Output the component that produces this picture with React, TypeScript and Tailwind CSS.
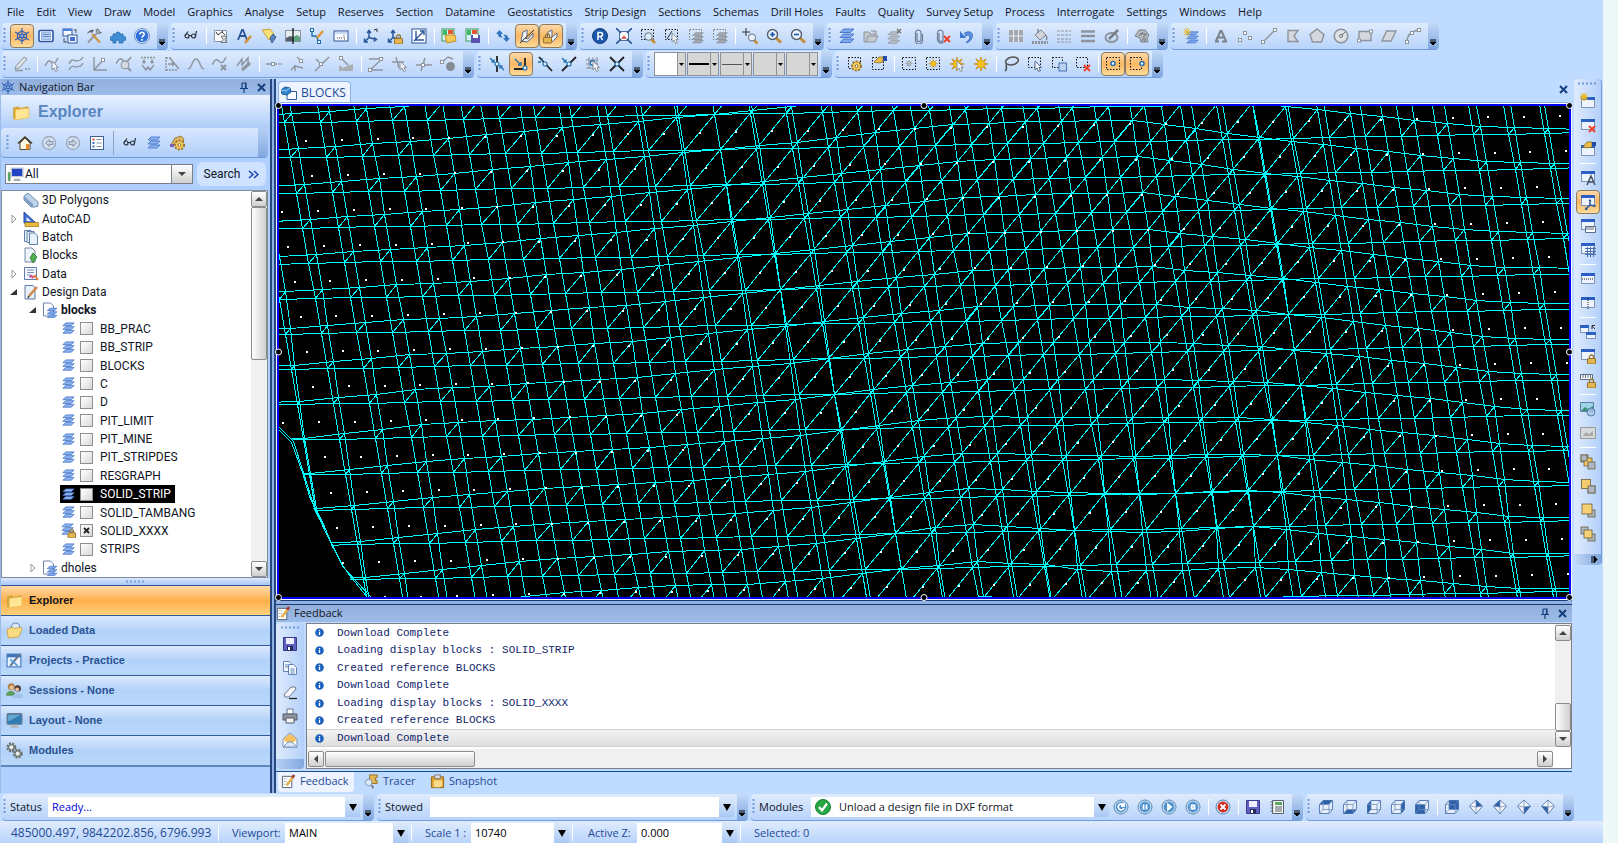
import { ReactNode } from "react";
import clsx from "clsx";

const NAVY = "#2a5599";
const GREY = "#8d949e";

const Win = ({ x = 1, y = 2, w = 14, h = 11 }: { x?: number; y?: number; w?: number; h?: number }) => (
  <>
    <rect x={x + 0.5} y={y + 0.5} width={w - 1} height={h - 1} fill="#eef4fd" stroke="#7d93b8" />
    <rect x={x} y={y} width={w} height={3} fill="#2c5fc4" />
  </>
);

const Layers = ({ fill = "#7fa9ee", line = "#3565bd" }: { fill?: string; line?: string }) => (
  <g fill={fill} stroke={line} strokeWidth=".8">
    <path d="M1 14.500 4.500 11H15l-3.500 3.500z" />
    <path d="M1 9.500 4.500 6H15l-3.500 3.500z" />
    <path d="M1 4.500 4.500 1H15l-3.500 3.500z" />
  </g>
);

const Dotted = ({ w = 13, h = 12, c = "#111" }: { w?: number; h?: number; c?: string }) => (
  <rect x="1.5" y="1.5" width={w} height={h} fill="none" stroke={c} strokeDasharray="1.5 1.5" />
);

const Lock = ({ x = 7, y = 6 }: { x?: number; y?: number }) => (
  <g transform={`translate(${x} ${y})`}>
    <path d="M2.5 5V3a2 2 0 0 1 4 0v2" fill="none" stroke="#96732a" strokeWidth="1.3" />
    <rect x=".5" y="4.5" width="8" height="5.5" rx=".6" fill="#e5b552" stroke="#96732a" />
  </g>
);

const Cursor = ({ c = "#8d949e" }: { c?: string }) => (
  <path d="M8 5v9l2-2 1.5 3.5 2-.8L12 11.500h2.500z" fill="#eef2f8" stroke={c} />
);

const Lens = ({ c = "#555f6e", mark }: { c?: string; mark?: string }) => (
  <>
    <path d="m10 10 5 4.500" stroke="#c98d35" strokeWidth="3" />
    <circle cx="6.500" cy="6.500" r="5" fill="#e8f1fc" stroke={c} strokeWidth="1.400" />
    {mark && <path d={mark} stroke="#1f57ab" strokeWidth="1.600" />}
  </>
);

const Sun = ({ c = "#f3c01f", s = "#c98c12" }: { c?: string; s?: string }) => (
  <>
    <path d="M8 1v14M1 8h14M3 3l10 10M13 3 3 13" stroke={s} strokeWidth="1.400" />
    <circle cx="8" cy="8" r="4" fill={c} stroke={s} strokeWidth=".6" />
  </>
);

const Cross = ({ x = 9, y = 9 }: { x?: number; y?: number }) => (
  <path d={`M${x} ${y}l6 6M${x + 6} ${y}l-6 6`} stroke="#f0412c" strokeWidth="2" />
);

const Folder = () => (
  <>
    <path d="M1 4l5-1 1 1.500L14 3l1 1v9l-12 2-2-1z" fill="#d7a537" />
    <path d="M3 6l12-1.500V13L3 15z" fill="#ffe594" stroke="#e6bd55" strokeWidth=".6" />
  </>
);

const Cube = ({ face }: { face: string }) => (
  <>
    <path d="M1.500 5.500 5 1.500h9.500v9L11 14.500H1.500z" fill="#e7eef8" stroke="#5a7fb5" />
    <path d={face} fill="#2f61a6" />
    <path d="M1.500 5.500H11v9M11 5.500l3.500-4M5 2v8.500h9M5 10.500l-3.500 4" fill="none" stroke="#6b8fc2" strokeWidth=".8" />
  </>
);

const Gem = ({ face }: { face: string }) => (
  <>
    <path d="M8 1l6.500 6L8 15 1.500 7z" fill="#f2f6fb" stroke="#6786b4" />
    <path d={face} fill="#2f61a6" />
    <path d="M8 1v7l-6.500-1M8 8l6.500-1M8 8v7" fill="none" stroke="#6786b4" strokeWidth=".7" />
  </>
);

const Round = ({ d, fill = "#4f93cf" }: { d: string; fill?: string }) => (
  <>
    <circle cx="8" cy="8" r="7" fill="#cfe2f3" stroke="#5b88b3" />
    <circle cx="8" cy="8" r="5.400" fill={fill} />
    <path d={d} fill="none" stroke="#fff" strokeWidth="1.800" />
  </>
);

const Axes = () => (
  <path
    d="M6 9.500V3M4 5l2-2.500L8 5M6 9.500l7 2M11 9.500l2.500 2-3 2M6 9.500l-4 4M1.500 10.500v3.500H5"
    fill="none"
    stroke={NAVY}
    strokeWidth="1.500"
  />
);

const Poly = ({ d, nodes = [], c = GREY }: { d: string; nodes?: number[][]; c?: string }) => (
  <>
    <path d={d} fill="none" stroke={c} strokeWidth="1.400" />
    {nodes.map(([x, y]) => (
      <rect key={`${x}-${y}`} x={x - 1.5} y={y - 1.5} width="3" height="3" fill="#fff" stroke={c} />
    ))}
  </>
);

const Snap = ({ d, arrow, x = 8, y = 8 }: { d: string; arrow?: string; x?: number; y?: number }) => (
  <>
    <path d={d} stroke="#222" strokeWidth="1.800" fill="none" />
    {arrow && <path d={arrow} stroke="#1e6fae" strokeWidth="1.300" fill="none" />}
    <circle cx={x} cy={y} r="2" fill="#e9f6ff" stroke="#1e6fae" strokeWidth="1.200" />
  </>
);

const Stack = ({ order }: { order: "back" | "mid" | "front" | "top" }) => (
  <g stroke="#6d5f3f" strokeWidth=".8">
    {order !== "front" && order !== "mid" && <rect x="1" y="1" width="7" height="7" fill="#aeb6c4" />}
    {order === "back" && <rect x="4" y="4" width="8" height="8" fill="#f0c65e" />}
    <rect x="8" y="8" width="7" height="7" fill="#aeb6c4" />
    {order === "back" && <rect x="1" y="1" width="6" height="6" fill="#aeb6c4" />}
    {order === "mid" && (
      <>
        <rect x="1.500" y="1.500" width="9" height="9" fill="#f3cd6c" />
        <rect x="8" y="8" width="7" height="7" fill="#aeb6c4" />
      </>
    )}
    {order === "front" && <rect x="2" y="2" width="10" height="10" fill="#f5d173" />}
    {order === "top" && <rect x="4" y="4" width="8" height="8" fill="#f5d173" />}
  </g>
);

const Gear = () => (
  <>
    <circle cx="9.500" cy="10" r="4.500" fill="#e9bd50" stroke="#9c7420" strokeWidth="2" strokeDasharray="2 1.300" />
    <circle cx="9.500" cy="10" r="3.500" fill="#efc965" />
    <circle cx="9.500" cy="10" r="1.400" fill="#fff" stroke="#9c7420" />
  </>
);

const icons: Record<string, ReactNode> = {
  wheel: (
    <g fill="none" stroke="#2f5fb5" strokeWidth="1.100">
      <path d="M8 3l4.500 2.500v5L8 13l-4.500-2.500v-5z" />
      <path d="M8 0v16M1 4l14 8M15 4 1 12" />
      <circle cx="8" cy="8" r="2" fill="#7fa8e6" />
    </g>
  ),
  form: (
    <>
      <rect x="1" y="2.500" width="14" height="11" rx="1" fill="#f5f8fd" stroke="#2c56a3" strokeWidth="1.600" />
      <path d="M3.500 4.500h9v7h-9z" fill="#bcd2f2" stroke="#6b92d2" strokeWidth=".6" />
      <path d="M4.500 6.500h7M4.500 8.500h7" stroke="#4c78c0" strokeWidth=".8" />
    </>
  ),
  windows: (
    <>
      <rect x="1" y="1" width="9" height="7" fill="#f5f8fd" stroke="#2c56a3" />
      <path d="M1 1h9v2H1z" fill="#4b7fe0" />
      <rect x="6" y="7" width="9" height="8" fill="#f5f8fd" stroke="#2c56a3" />
      <path d="M8 9h5v4H8z" fill="#3d6fd6" />
      <path d="M2 10v4h3M12 2h2v3" fill="none" stroke="#6a7383" strokeWidth="1.300" />
    </>
  ),
  tools: (
    <>
      <path d="M2 14.500 12 4" stroke="#9aa0a9" strokeWidth="2.200" />
      <path d="M10 1.500c0 2 1 4.500 4.500 4l1-1-2.500-.5L13 2l-1-1z" fill="#b8bdc5" stroke="#5d6470" strokeWidth=".8" />
      <path d="m6 6 8 8.500" stroke="#cf9444" strokeWidth="2.200" />
      <path d="M1 6c1-3 4-5 7-4L6 5 4 4z" fill="#5d6470" />
    </>
  ),
  puzzle: (
    <path d="M3 6h3a2 2 0 1 1 4 0h3v3a2 2 0 1 1 0 3v3h-4a1.800 1.800 0 1 0-3 0H3v-3a2 2 0 1 1 0-3z" fill="#3f8cd3" stroke="#2268ab" strokeWidth=".8" />
  ),
  help: (
    <>
      <circle cx="8" cy="8" r="7" fill="#2f6fd8" stroke="#dfeafb" strokeWidth="1.500" />
      <circle cx="8" cy="8" r="7.500" fill="none" stroke="#2454a5" strokeWidth=".6" />
      <path d="M5.800 6.500c0-3 4.600-2.800 4.400 0C10 8 8 8 8 9.800M8 11v1.700" fill="none" stroke="#fff" strokeWidth="1.600" />
    </>
  ),
  glasses: (
    <g fill="none" stroke="#27303c" strokeWidth="1.200">
      <circle cx="4" cy="8" r="2" />
      <circle cx="10.500" cy="8" r="2" />
      <path d="M6 7.500h2.500M2 7.500l3-4M12.500 8 13.500 3" />
    </g>
  ),
  sheet: (
    <>
      <path d="M1.500 2.500h12v11h-12z" fill="#fff" stroke="#8793a6" />
      <path d="m3 4 2 3 5-4M9 4l3 3" stroke="#333" fill="none" />
      <path d="M8 8h6l-2 3.500 2 3H8l2-3z" fill="#d5dae2" stroke="#566" strokeWidth=".8" />
    </>
  ),
  fontEdit: (
    <>
      <path d="m1 12 4-10h1l4 10M3 8h5" fill="none" stroke={NAVY} strokeWidth="1.800" />
      <path d="m8 15 6-7" stroke="#d59238" strokeWidth="2.500" />
    </>
  ),
  torch: (
    <>
      <path d="M1 2 9 1l4 5-5 6z" fill="#fbe07a" stroke="#caa13d" />
      <path d="m9 10 3-4 3 3-4 6z" fill="#5983bf" stroke="#395c92" />
    </>
  ),
  contrast: (
    <>
      <rect x="0.500" y="2.500" width="15" height="11" fill="#e8eef0" stroke="#87909d" />
      <path d="M1 10l4-2 3 1v4H1z" fill="#55606e" />
      <path d="M8 9l4-2 3 2v4H8z" fill="#5fa584" />
      <path d="M8 0v16" stroke="#111" strokeWidth="1.300" />
    </>
  ),
  nodeEdit: (
    <>
      <Poly d="M3 2v6h4l3 6" nodes={[[3, 2], [10, 14]]} c="#1e6fae" />
      <path d="m8 10 6-7" stroke="#e09a3b" strokeWidth="2.600" />
    </>
  ),
  panel: (
    <>
      <rect x="1" y="3" width="14" height="10" fill="#f8fafd" stroke={NAVY} />
      <path d="M2 4h12v2H2z" fill="#c6d8f2" />
      <path d="M4 10h5M11 7v4h2" stroke="#444" strokeDasharray="1 1" fill="none" />
    </>
  ),
  axes: (
    <>
      <Axes />
      <path d="m11 2 3-1v3" stroke="#333" fill="none" />
    </>
  ),
  axesLock: (
    <>
      <Axes />
      <Lock />
    </>
  ),
  axesBox: (
    <>
      <rect x="1" y="1" width="14" height="14" fill="#fff" stroke={NAVY} />
      <path d="M3 13 12 4M5 3v9h8M9 3h4v4" stroke={NAVY} fill="none" strokeWidth="1.400" />
    </>
  ),
  photoOpen: (
    <>
      <rect x="1" y="1" width="12" height="12" fill="#d8f0fa" stroke="#3f9a55" />
      <path d="M2 2h4v5H2z" fill="#3db860" />
      <path d="M7 2h5v4H7z" fill="#e95433" />
      <path d="M4 8l3-1h7l1 6-9 2z" fill="#f4c95a" stroke="#c58f24" />
    </>
  ),
  photoSave: (
    <>
      <rect x="1" y="1" width="12" height="12" fill="#d8f0fa" stroke="#3f9a55" />
      <path d="M2 2h4v5H2z" fill="#3db860" />
      <path d="M7 2h5v4H7z" fill="#e95433" />
      <path d="M6 7h9v8H6z" fill="#5a53b2" />
      <path d="M8 7h5v3H8z" fill="#fff" />
    </>
  ),
  sync: (
    <g fill="#2f74bd">
      <path d="M1 6l3.500-4L8 6H6c0 2 1 3 2 3-3 1-5 0-5-3z" />
      <path d="m15 10-3.500 4L8 10h2c0-2-1-3-2-3 3-1 5 0 5 3z" />
    </g>
  ),
  slab: (
    <>
      <path d="M2 13 4 4l4-2v6l-2 2 3 1 5-6v4l-6 5z" fill="#edf2f9" stroke="#5a6a84" />
      <path d="M1 15 15 2" stroke="#333" />
    </>
  ),
  slabLock: (
    <>
      <path d="M4 12 5 4l4-2v6l-1 2 6-5v4l-5 5z" fill="#edf2f9" stroke="#5a6a84" />
      <Lock x={0} y={5} />
    </>
  ),
  register: (
    <>
      <circle cx="8" cy="8" r="7.500" fill="#1c57ae" stroke="#123b7a" />
      <path d="M6 12V4.500h2.500a2 2 0 0 1 0 4H6M8.500 8.500l2 3.500" fill="none" stroke="#fff" strokeWidth="1.500" />
    </>
  ),
  fit: (
    <>
      <rect x="3.500" y="3.500" width="9" height="9" fill="#fff" stroke="#5570a0" />
      <path d="m0 0 5 5M16 0l-5 5M0 16l5-5M16 16l-5-5" stroke={NAVY} strokeWidth="1.600" />
      <path d="m5 11 3-4 3 4z" fill="#d66a58" />
    </>
  ),
  zoomBox: (
    <>
      <Dotted w={12} h={10} />
      <path d="m11 11 4 4" stroke="#c98d35" strokeWidth="2.600" />
      <circle cx="8.500" cy="8.500" r="3.800" fill="#d9ebfc" stroke="#666f7d" />
    </>
  ),
  pickBox: (
    <>
      <Dotted w={12} h={10} />
      <path d="m3 11 5-8" stroke="#333" />
      <Cursor />
    </>
  ),
  layerBox: (
    <>
      <Dotted w={12} h={10} c="#777" />
      <g transform="translate(4 4) scale(.75)">
        <Layers fill="#a9adb3" line="#777d86" />
      </g>
    </>
  ),
  zoomPlus: (
    <>
      <path d="M4 0v8M0 4h8" stroke="#333" />
      <path d="m12 12 4 4" stroke="#c98d35" strokeWidth="2.600" />
      <circle cx="10" cy="9.500" r="3.600" fill="#e8f1fc" stroke="#666f7d" />
    </>
  ),
  zoomIn: <Lens mark="M4 6.500h5M6.500 4v5" />,
  zoomOut: <Lens mark="M4 6.500h5" />,
  layers: <Layers />,
  layersGrey: (
    <>
      <g transform="translate(0 3) scale(.85)">
        <Layers fill="#b9bdc3" line="#8d949e" />
      </g>
      <path d="m10 1 4 4M14 1l-4 4" stroke="#777" strokeWidth="1.500" />
    </>
  ),
  folderGrey: (
    <path d="M1 14V4h5l1 2h6v2h2l-3 6zM3 14l2-6h8M8 3h5v3" fill="#c6cace" stroke={GREY} />
  ),
  clip: (
    <path d="M6 5v6.500a2 2 0 0 0 4 0V4a3 3 0 0 0-5.500 0v8a3.500 3.500 0 0 0 7 1V6" fill="none" stroke="#6f7f98" strokeWidth="1.200" />
  ),
  clipCut: (
    <>
      <path d="M4 5v6.500a2 2 0 0 0 4 0V4a3 3 0 0 0-5.500 0v8a3.500 3.500 0 0 0 6 2" fill="none" stroke="#6f7f98" strokeWidth="1.200" />
      <Cross y={8} />
    </>
  ),
  undo: (
    <>
      <path d="M5 5.500c6-4 10 0 8 4-1 3-3 5-6 5 3-2 5-5 3-7-1-1-3 0-4 1" fill="#5d94e0" stroke="#2f62b0" strokeWidth=".8" />
      <path d="M1 3v7h6z" fill="#3f78cc" />
    </>
  ),
  swatches: (
    <>
      <path d="M1 2h14v12H1z" fill="#a4a8ad" />
      <path d="M1 8h14M5.500 2v12M10.500 2v12" stroke="#e8edf4" />
    </>
  ),
  bucket: (
    <>
      <path d="m3 7 6-5 5 5-6 5z" fill="#d2d5d9" stroke="#7c838d" />
      <path d="M13 7c3 2 2 4 1 5M6 5V1" stroke="#7c838d" fill="none" strokeWidth="1.400" />
      <path d="M0 14.500h16" stroke="#8a9099" strokeWidth="3" strokeDasharray="2 1" />
    </>
  ),
  dashes: (
    <path d="M1 3h14M1 7h14M1 11h14M1 14h14" stroke={GREY} strokeDasharray="3 1" />
  ),
  lines: <path d="M1 3.500h14M1 8h14M1 13h14" stroke={GREY} strokeWidth="2.400" />,
  brush: (
    <>
      <ellipse cx="7.500" cy="9.500" rx="6" ry="4.500" fill="none" stroke={GREY} strokeWidth="2" />
      <path d="M5 11 14 2" stroke="#777e88" strokeWidth="2.600" />
    </>
  ),
  shell: (
    <>
      <path d="M1 8 5 2h6l4 5-2 3 1 4H7L6 10z" fill="#b5b9bf" stroke="#7c838d" />
      <path d="M5 8l4-4M9 9l4-3M8 13l2-3M6 6h6M11 10v4" stroke="#6c737d" />
    </>
  ),
  newLayers: (
    <>
      <g transform="translate(3 3) scale(.82)">
        <Layers />
      </g>
      <path d="M4 0v8M0 4h8M1 1l6 6M7 1 1 7" stroke="#e8b923" />
    </>
  ),
  text: (
    <path d="m3 13 4.500-10h1l4.500 10M5 9.500h5.500M2 13.500h4M9 13.500h5" fill="none" stroke="#7b828c" strokeWidth="2" />
  ),
  points: <Poly d="" nodes={[[3, 12], [8, 5], [13, 10]]} />,
  line: <Poly d="M2 14 14 2" nodes={[[2, 14], [14, 2]]} />,
  flag: <path d="M3 2.500h10L9 8l4 5.500H3z" fill="#d5d8dc" stroke={GREY} strokeWidth="1.400" />,
  pentagon: <path d="M8 1l7 5.500L12.500 14h-9L1 6.500z" fill="#d5d8dc" stroke={GREY} strokeWidth="1.400" />,
  circle: (
    <>
      <circle cx="8" cy="8" r="6.800" fill="#dee1e5" stroke={GREY} strokeWidth="1.600" />
      <path d="m8 8 4-4" stroke="#666" />
      <circle cx="8" cy="8" r="1.500" fill="#fff" stroke="#666" />
    </>
  ),
  rect: (
    <>
      <path d="M2 3.500h12v9H2z" fill="#d5d8dc" />
      <Poly d="M2 3.500h12v9H2z" nodes={[[14, 3.500], [2, 12.500]]} />
    </>
  ),
  skew: <path d="M5.500 3H15l-5 10H1z" fill="#d5d8dc" stroke={GREY} strokeWidth="1.400" />,
  arc: <Poly d="M2 14c0-7 4-11 12-12" nodes={[[2, 14], [7, 5], [14, 2]]} />,
  pencil: (
    <>
      <path d="m2 10 8-9 3 2-8 9-4 1z" fill="#dfe2e6" stroke={GREY} />
      <path d="M1 14.500h8M11 13h2M14 13h2" stroke={GREY} strokeWidth="1.500" />
    </>
  ),
  curvePick: (
    <>
      <Poly d="M1 10c4-8 5-5 7-3s4-1 6-5" />
      <Cursor />
    </>
  ),
  curves: <Poly d="M1 8c3-7 5-3 7-3s5 0 7-4M1 14c3-6 5-3 7-3s5 0 7-4" />,
  angle: <Poly d="M2 1v13h13M2 14 11 4" nodes={[[11, 4]]} />,
  curveLens: (
    <>
      <Poly d="M0 8c4-8 5-5 8-3s5-1 7-4" />
      <circle cx="9" cy="9" r="4" fill="#d5d9de" stroke={GREY} />
      <path d="m12 12 3 3" stroke={GREY} strokeWidth="2" />
    </>
  ),
  drape: (
    <>
      <path d="M1 1.500h14" stroke={GREY} strokeWidth="1.400" strokeDasharray="2 1" />
      <Poly d="M4 3v4M2.500 5.500 4 7l1.500-1.500M12 3v4M10.500 5.500 12 7l1.500-1.500M2 9l4 5 2-3 2 3 4-5" />
    </>
  ),
  shift: (
    <>
      <path d="M2 1v14M2 2h5M2 14h12" stroke={GREY} strokeWidth="1.400" strokeDasharray="2 1" />
      <Poly d="m6 2 9 11M4 8h6M8 6l2 2-2 2" />
    </>
  ),
  wave: <Poly d="M0 13C4 13 4 3 8 3s4 10 8 10" />,
  curveCut: (
    <>
      <Poly d="M0 9c4-8 5-5 8-3s4-1 6-5" />
      <path d="m9 9 5 5M14 9l-5 5" stroke={GREY} strokeWidth="2" />
    </>
  ),
  zigs: (
    <>
      <Poly d="m1 10 5-7v6l6-7v6" />
      <path d="m6 14 8-7" stroke="#8d949e" strokeWidth="3" />
    </>
  ),
  insert: <Poly d="M0 8h5M9 8h2M12 8h1.500M14.500 8H16" nodes={[[7, 8]]} />,
  moveAxis: <Poly d="M5 9v6M1 14l4-4 8 2M7 1l6 6" nodes={[[11, 5]]} />,
  extend: <Poly d="M1 15 15 1M2 3l3 3" nodes={[[7, 8]]} />,
  terrain: (
    <>
      <path d="M1 15V9l4 3 4-2 6-2v7z" fill="#a9aeb5" />
      <Poly d="m3 2 7 7" nodes={[[3, 2]]} />
    </>
  ),
  zpath: <Poly d="M1 3h13L2 14h13" nodes={[[13, 3], [2, 14]]} />,
  breakPick: (
    <>
      <Poly d="M0 6h12M4 1l3 11" />
      <Cursor />
    </>
  ),
  breakLine: <Poly d="M0 9h16M9 2 5 15" nodes={[[7, 9]]} />,
  bomb: (
    <>
      <Poly d="M1 7 8 1l5 2" nodes={[[2, 6]]} />
      <circle cx="10.500" cy="10.500" r="4.500" fill="#858c95" />
    </>
  ),
  snapPoint: <Snap d="M8 0v16" arrow="m1 2 4 4M2.500 6H5V3.500M15 14l-4-4M13.500 10H11v2.500" />,
  snapCorner: <Snap d="M1 13h11V2" arrow="m2 3 6 6M5 9h3V6" x={12} y={12} />,
  snapLine: <Snap d="m2 1 13 14" arrow="M1 6h3M5 2v3" />,
  snapMid: <Snap d="M1 15 15 1" arrow="m1 2 4 4M2.500 6H5V3.500" />,
  snapGrid: (
    <>
      <path d="M1 4h12M1 8h12M1 12h8M4 1v12M8 1v12M12 1v8" stroke="#8b919b" />
      <circle cx="7.500" cy="7" r="2.200" fill="#fff" stroke="#1e6fae" strokeWidth="1.400" />
      <Cursor />
    </>
  ),
  snapCross: <Snap d="M1 1l14 14M15 1 1 15" />,
  boxGear: (
    <>
      <Dotted w={12} h={11} />
      <Gear />
    </>
  ),
  boxHand: (
    <>
      <Dotted w={11} h={12} />
      <path d="M3 6 8 1h4v5l-5 1z" fill="#e9be4f" stroke="#8a6a22" strokeWidth=".8" />
      <path d="M12 0h4v5h-4z" fill="#2449a8" />
    </>
  ),
  boxSunGrey: (
    <>
      <Dotted />
      <g transform="translate(4 3.500) scale(.5)">
        <Sun c="#b5b9bf" s="#888" />
      </g>
    </>
  ),
  boxSun: (
    <>
      <Dotted />
      <g transform="translate(3 2.500) scale(.65)">
        <Sun />
      </g>
    </>
  ),
  sunPick: (
    <>
      <Sun />
      <Cursor />
    </>
  ),
  sun: <Sun />,
  lasso: (
    <>
      <ellipse cx="9" cy="5" rx="6.500" ry="3.800" fill="none" stroke="#555" strokeWidth="1.600" transform="rotate(-12 9 5)" />
      <path d="M4 8c-3 2 2 4-2 7" fill="none" stroke="#555" strokeWidth="1.600" />
    </>
  ),
  boxPick: (
    <>
      <Dotted w={12} h={10} />
      <Cursor c="#5c6c87" />
    </>
  ),
  boxFill: (
    <>
      <Dotted w={10} h={10} />
      <rect x="8" y="7" width="7.500" height="8" fill="#b8d0f2" stroke="#4c76b5" />
    </>
  ),
  boxCut: (
    <>
      <Dotted w={11} h={10} />
      <Cross />
    </>
  ),
  boxCentre: (
    <>
      <Dotted />
      <circle cx="8" cy="7.500" r="2" fill="#fff" stroke="#1e6fae" strokeWidth="1.500" />
    </>
  ),
  boxEdge: (
    <>
      <Dotted w={11} />
      <circle cx="13" cy="7.500" r="2" fill="#fff" stroke="#1e6fae" strokeWidth="1.500" />
    </>
  ),
  home: (
    <>
      <path d="M3 8v6.500h10V8L8 3z" fill="#fdf6e3" stroke="#544a35" />
      <path d="M1 8.500 8 2l7 6.500" fill="none" stroke="#453c2a" strokeWidth="1.600" />
      <path d="M9 9h3v5.500H9z" fill="#e88c2e" />
    </>
  ),
  back: (
    <>
      <circle cx="8" cy="8" r="6.500" fill="#d6e2f3" stroke="#9aa7ba" strokeWidth="1.300" />
      <path d="M8 4.500 4.500 8 8 11.500V9.500h4v-3H8z" fill="#c5d1e2" stroke="#8793a6" />
    </>
  ),
  forward: (
    <>
      <circle cx="8" cy="8" r="6.500" fill="#d6e2f3" stroke="#9aa7ba" strokeWidth="1.300" />
      <path d="m8 4.500 3.500 3.500L8 11.500V9.500H4v-3h4z" fill="#c5d1e2" stroke="#8793a6" />
    </>
  ),
  details: (
    <>
      <rect x="1.500" y="1.500" width="13" height="13" fill="#fff" stroke="#405f94" />
      <path d="M7.500 4.500h5M7.500 8h5M7.500 11.500h5" stroke="#8090aa" />
      <path d="M3.500 3.500h2v2h-2z" fill="#d24a3a" />
      <path d="M3.500 7h2v2h-2zM3.500 10.500h2v2h-2z" fill="#3a6fd2" />
    </>
  ),
  gearCloud: (
    <>
      <path d="M1 10 5 3l6-2 3 3-2 6z" fill="#e0b968" stroke="#9a7a3c" />
      <path d="M0 9h4v3H0z" fill="#7d5fb8" />
      <Gear />
    </>
  ),
  folder: <Folder />,
  monitorSmall: (
    <>
      <path d="M4 2h11v8H4z" fill="#2045c7" stroke="#c8ccd4" strokeWidth="1.400" />
      <path d="M7 12h5l1 2H6z" fill="#a5abb5" />
      <path d="M1 6h2v8H1z" fill="#4a5" stroke="#888" strokeWidth=".5" />
    </>
  ),
  polygons: (
    <>
      <path d="m1 4 4-3 10 9v4l-3 1H8L1 8z" fill="#bcd3ea" stroke="#6e8fb6" />
      <path d="M1 4l9 8v3H8L1 8z" fill="#7f9fc4" />
    </>
  ),
  autocad: (
    <>
      <path d="M1 1v11h12z" fill="#3d6fd6" stroke="#234a9c" />
      <path d="M3.500 6v4H8z" fill="#e7effb" />
      <path d="M2 11.500h14v4H2z" fill="#e7b93c" stroke="#9c7419" strokeWidth=".7" />
    </>
  ),
  batch: (
    <g fill="#eaf3fc" stroke="#5f80a8">
      <path d="M1.500 1.500H8v11H1.500z" />
      <path d="M4 2.500h7v11H4z" />
      <path d="M6.500 4h5l3 3v8.500h-8z" />
    </g>
  ),
  blocksDoc: (
    <>
      <path d="M2 1h7l3 3v11H2z" fill="#eef3fa" stroke="#7488a5" />
      <path d="m10 6 4 4-4 6-3-5z" fill="#4fae4d" stroke="#2e7a32" strokeWidth=".8" />
    </>
  ),
  dataDoc: (
    <>
      <path d="M1.500 1.500h12v12h-12z" fill="#f2f6fc" stroke="#5f7aa5" />
      <path d="M4 4h7M4 6.500h7M4 9h4" stroke="#7b8fb2" />
      <path d="m6.500 11 2-1 2 2" stroke="#c64fa8" strokeWidth="2" fill="none" />
      <path d="m10 11 2-1 3 4" stroke="#e2783a" strokeWidth="2" fill="none" />
    </>
  ),
  designDoc: (
    <>
      <path d="M2 1.500h8l2 2.500v11H2z" fill="#e9f1fa" stroke="#5f7aa5" />
      <path d="m6 12 8-9" stroke="#d08b4b" strokeWidth="2.600" />
      <path d="m6 12-1 2" stroke="#333" strokeWidth="1.500" />
    </>
  ),
  layerDoc: (
    <>
      <path d="M1.500 1h7l3 3v10h-10z" fill="#fff" stroke="#6c86ad" />
      <g transform="translate(4.500 5.500) scale(.7)">
        <Layers />
      </g>
    </>
  ),
  smallLayers: (
    <g fill="#8fb4f0" stroke="#3e6fc4" strokeWidth=".8">
      <path d="m2 13 3-3h9l-3 3zM2 9l3-3h9l-3 3zM2 5l3-3h9l-3 3z" />
    </g>
  ),
  smallLayersLock: (
    <>
      <g fill="#8fb4f0" stroke="#3e6fc4" strokeWidth=".8">
        <path d="m1 12 3-3h9l-3 3zM1 8l3-3h9l-3 3zM1 4l3-3h9l-3 3z" />
      </g>
      <Lock x={7} y={6} />
    </>
  ),
  loaded: (
    <>
      <circle cx="9" cy="5" r="4" fill="#d8e8f7" stroke="#5f8dbd" />
      <path d="m1 7 5-2 2 1 6-1 1 2-3 7-10 1z" fill="#f9db84" stroke="#cf9f3e" strokeWidth=".8" />
    </>
  ),
  project: (
    <>
      <rect x="1" y="2" width="13" height="12" fill="#eaf2fc" stroke="#3c73bb" />
      <path d="M1 2h13v3H1z" fill="#3c73bb" />
      <path d="m4 13 9-11" stroke="#66778f" strokeWidth="2" />
      <path d="m4 7 7 6" stroke="#4f9ade" strokeWidth="1.500" />
    </>
  ),
  people: (
    <>
      <circle cx="5" cy="4.500" r="3.300" fill="#b5824a" />
      <circle cx="5.300" cy="5.300" r="2" fill="#edc29a" />
      <path d="M0 13c0-6 9-6 9 0z" fill="#5c9b57" />
      <circle cx="11" cy="6" r="3" fill="#4c3a30" />
      <circle cx="10.500" cy="7" r="1.800" fill="#edc29a" />
      <path d="M6 15c0-6 10-6 10 0z" fill="#9fc2e6" />
    </>
  ),
  monitor: (
    <>
      <rect x="1" y="1.500" width="14" height="10" rx="1" fill="#2f7cb3" stroke="#6b7a8b" />
      <path d="M2 2.500h12L2 9z" fill="#66a8d2" />
      <path d="M5 12h6l1 3H4z" fill="#b2b9c2" />
    </>
  ),
  gears: (
    <g fill="none" stroke="#6a756f">
      <circle cx="5" cy="5" r="3.500" strokeWidth="2.400" strokeDasharray="1.800 1" />
      <circle cx="11" cy="11" r="3.500" strokeWidth="2.400" strokeDasharray="1.800 1" />
      <circle cx="5" cy="5" r="2.500" fill="#e4ebe8" />
      <circle cx="11" cy="11" r="2.500" fill="#e4ebe8" />
    </g>
  ),
  blocksTab: (
    <>
      <path d="M6 6.500h9.500v8H6z" fill="#fff" stroke="#355c96" />
      <path d="M0 5l4-3 5 1 1 4-4 3-5-1z" fill="#2f86cc" stroke="#1c5c96" />
      <path d="m0 5 5 1 4-3" stroke="#9fd0f2" fill="none" />
    </>
  ),
  feedback: (
    <>
      <path d="M1.500 2.500h10v12h-10z" fill="#fff" stroke="#555f6d" />
      <path d="M3 5h3M3 8h4M3 11h6" stroke="#6f8198" strokeDasharray="1 1" />
      <path d="m6 12 7-9" stroke="#e3b14a" strokeWidth="2.600" />
      <path d="m12 4 2-3" stroke="#a63b32" strokeWidth="3" />
    </>
  ),
  tracer: (
    <>
      <path d="M6 1h8v3h-2v3h2v3H8V7H6z" fill="#e8b94e" stroke="#8f6c1e" />
      <circle cx="5" cy="9" r="3.500" fill="#dcebf9" stroke="#7c93ae" />
      <path d="m8 12 2 3" stroke="#777" strokeWidth="2" />
    </>
  ),
  snapshot: (
    <>
      <path d="M1.500 3h13v11.500h-13z" fill="#e0a02f" stroke="#8f6418" />
      <path d="M5 1h6v4H5z" fill="#ddd" stroke="#777" />
      <path d="M4 7h9v5l-2 2H4z" fill="#f9dc8a" />
    </>
  ),
  save: (
    <>
      <path d="M1.500 1.500h13v13h-13z" fill="#5f5fc4" stroke="#3b3b8a" />
      <path d="M4 2h8v6H4z" fill="#eef" />
      <path d="M5 10h6v4.500H5z" fill="#222a55" />
      <path d="M6 11h2v3H6z" fill="#fff" />
    </>
  ),
  copy: (
    <g fill="#f4f8fe" stroke="#6383b5">
      <path d="M1.500 1.500h6l2 2v8h-8z" />
      <path d="M6.500 4.500h5l3 3v7h-8z" />
      <path d="M3 5h3M3 7h3M8.500 9h4M8.500 11h4M8.500 13h4" />
    </g>
  ),
  eraser: (
    <>
      <path d="M2 11 9 3h4l1 2-7 8H3z" fill="#f7f9fc" stroke="#6a7689" />
      <path d="M7 14.500h8" stroke="#222" strokeWidth="1.300" />
    </>
  ),
  print: (
    <>
      <path d="M5 1h6v5H5z" fill="#fff" stroke="#6a7689" />
      <path d="M1 6h14v6H1z" fill="#8f959e" stroke="#555c66" />
      <path d="M4 10h8v5H4z" fill="#f4f4f4" stroke="#555c66" />
    </>
  ),
  mail: (
    <>
      <path d="M1 7 8 1l7 6v8H1z" fill="#fff" stroke="#7790b5" />
      <path d="M1 7 8 2l7 5-3 3H4z" fill="#f4bf5e" />
      <path d="m1 15 5-5h4l5 5z" fill="#dbe8f8" stroke="#7790b5" />
    </>
  ),
  check: (
    <>
      <circle cx="8" cy="8" r="7.500" fill="#27a844" stroke="#168233" />
      <path d="m4 8 3 3.500 5-7" fill="none" stroke="#fff" strokeWidth="2.200" />
    </>
  ),
  rewind: <Round d="M10.500 6A3 3 0 1 0 11 9M11 4v3H8" />,
  pause: <Round d="M6.500 5.500v5M9.500 5.500v5" />,
  play: <Round d="M7 5.500 10 8l-3 2.500z" />,
  stop: <Round d="M6.500 6.500h3v3h-3z" />,
  cancel: <Round d="m5.500 5.500 5 5M10.500 5.500l-5 5" fill="#cf2b1f" />,
  notebook: (
    <>
      <path d="M3.500 1.500h11v13h-11z" fill="#f4f7f3" stroke="#55616b" />
      <path d="M6 3h7v3H6z" fill="#5aa860" />
      <path d="M6 8h7M6 10h7M6 12h7M1.500 3h3M1.500 6h3M1.500 9h3M1.500 12h3" stroke="#55616b" />
    </>
  ),
  cubeTop: <Cube face="M1.500 5.500 5 1.500h9.500L11 5.500z" />,
  cubeBottom: <Cube face="M1.500 14.500 5 10.500h9.500L11 14.500z" />,
  cubeLeft: <Cube face="M1.500 5.500 5 1.500v9l-3.500 4z" />,
  cubeRight: <Cube face="M11 5.500l3.500-4v9L11 14.500z" />,
  cubeFront: <Cube face="M1.500 5.500H11v9H1.500z" />,
  cubeBack: <Cube face="M5 1.500h9.500v9H5z" />,
  gemA: <Gem face="M8 1l6.500 6L8 8z" />,
  gemB: <Gem face="M8 1 1.500 7 8 8z" />,
  gemC: <Gem face="M14.500 7 8 15V8z" />,
  gemD: <Gem face="M1.500 7 8 15V8z" />,
  winNew: (
    <>
      <Win y={4} />
      <path d="M4 0v8M0 4h8M1 1l6 6M7 1 1 7" stroke="#e8b923" strokeWidth="1.300" />
    </>
  ),
  winClose: (
    <>
      <Win />
      <Cross />
    </>
  ),
  winHand: (
    <>
      <Win y={4} />
      <path d="M3 6 7 1h5v5l-5 1z" fill="#e9be4f" stroke="#8a6a22" strokeWidth=".8" />
      <path d="M12 1h4v4h-4z" fill="#2449a8" />
    </>
  ),
  winText: (
    <>
      <Win y={1} />
      <path d="m7 15 4-9 4 9M8 12h6" fill="none" stroke="#4a5768" strokeWidth="1.600" />
    </>
  ),
  winAxes: (
    <>
      <Win y={1} />
      <path d="M10 11V6M10 11l5 1M10 11l-4 4" stroke={NAVY} strokeWidth="1.500" />
      <path d="M8.500 7 10 5l1.500 2zM14 10l2 2-2.500 1.500zM5 13v3h3z" fill={NAVY} />
    </>
  ),
  winRuler: (
    <>
      <Win y={1} />
      <path d="M5.500 8.500h10v6h-10z" fill="#fff" stroke="#5c6c87" />
      <path d="M7 9v3M9 9v3M11 9v3M13 9v3" stroke="#5c6c87" />
    </>
  ),
  winGrid: (
    <>
      <Win y={1} />
      <path d="M5 6.500h11M5 9.500h11M5 12.500h11M7.500 5v10M10.500 5v10M13.500 5v10" stroke="#4a6fb0" />
    </>
  ),
  winSplitH: (
    <>
      <Win />
      <path d="M2 8h12" stroke="#222" strokeDasharray="1 1" />
    </>
  ),
  winSplitV: (
    <>
      <Win />
      <path d="M8 3v12" stroke="#222" strokeDasharray="1 1" />
    </>
  ),
  winPair: (
    <>
      <Win x={0} y={1} w={9} h={8} />
      <Win x={6} y={8} w={10} h={7} />
      <path d="m12 2 3 3M12 5V1.500h3" fill="none" stroke="#333" />
    </>
  ),
  winLock: (
    <>
      <Win y={1} />
      <Lock />
    </>
  ),
  rulerLock: (
    <>
      <path d="M.5 2.500h12v5H.5z" fill="#fff" stroke="#5c6c87" />
      <path d="M3 3v3M5.500 3v3M8 3v3M10.500 3v3" stroke="#5c6c87" />
      <Lock />
    </>
  ),
  picSearch: (
    <>
      <path d="M.5 1.500h13v9H.5z" fill="#9fd4e8" stroke="#5c7fa8" />
      <path d="m1 10 4-4 3 2 5-3v5z" fill="#3e8e78" />
      <circle cx="11" cy="11" r="4" fill="#a8c7ea" fillOpacity=".8" stroke="#5c7fa8" />
    </>
  ),
  picGrey: (
    <>
      <path d="M.5 2.500h15v11H.5z" fill="#d6d8da" stroke="#999" />
      <path d="m3 11 3-4 3 2 4-3v5z" fill="#aaa" />
    </>
  ),
  stackBack: <Stack order="back" />,
  stackMid: <Stack order="mid" />,
  stackFront: <Stack order="front" />,
  stackTop: <Stack order="top" />,
};

const Icon = ({ id, className, size = "size-4" }: { id: string; className?: string; size?: string }) => (
  <svg viewBox="0 0 16 16" className={clsx("shrink-0", size, className)} aria-hidden="true">
    {icons[id]}
  </svg>
);

const Grip = () => (
  <svg width="3" height="18" className="ml-px mr-1 shrink-0 self-center" aria-hidden="true">
    <path d="M1.500 1v16" stroke="#6f9be0" strokeWidth="2" strokeDasharray="2 2" />
  </svg>
);

const Cap = () => (
  <button
    aria-label="Toolbar options"
    className="ml-[3px] flex w-[11px] shrink-0 items-end justify-center self-stretch rounded-r-sm bg-linear-to-b from-[#c3d9f8] to-[#7fa6de] pb-[3px]"
  >
    <svg width="7" height="7" aria-hidden="true">
      <path d="M0 1h6M0 3l3 3 3-3z" stroke="#000" fill="#000" strokeWidth="1" />
    </svg>
  </button>
);

const Tools = ({ items, active = [] }: { items: string; active?: string[] }) => (
  <>
    {items.split(" ").map((id, i) =>
      id === "|" ? (
        <span key={i} className="flex w-[6px] shrink-0 justify-center">
          <span className="h-4 w-px bg-white" />
        </span>
      ) : (
        <button
          key={i}
          aria-label={id}
          className={clsx(
            "flex size-6 shrink-0 items-center justify-center rounded-sm",
            active.includes(id) && "border border-[#8b7a5c] bg-linear-to-b from-[#fbd9ab] via-[#fbb763] to-[#fddc9a]"
          )}
        >
          <Icon id={id} />
        </button>
      )
    )}
  </>
);

const Toolbar = ({ children }: { children: ReactNode }) => (
  <div className="flex h-[27px] shrink-0 items-center rounded-sm border-b border-[#6f9be0] bg-linear-to-b from-[#dfebfc] to-[#b8d4fb]">
    <Grip />
    {children}
    <Cap />
  </div>
);

const Select = ({ label, value, className, children }: { label: string; value: string; className?: string; children?: ReactNode }) => (
  <div className={clsx("relative flex h-[20px] items-center bg-white", className)}>
    {children}
    <select
      id={label}
      defaultValue={value}
      className="h-full w-full appearance-none bg-transparent pl-1 outline-none"
    >
      <option>{value}</option>
    </select>
    <span className="pointer-events-none absolute right-0 top-0 flex h-full w-[15px] items-center justify-center bg-linear-to-b from-[#dce9fb] to-[#a9c8f5]">
      <svg width="8" height="7" aria-hidden="true">
        <path d="M0 0h8L4 7z" />
      </svg>
    </span>
  </div>
);

const Pin = () => (
  <svg width="10" height="11" aria-hidden="true">
    <path d="M3 1v5M3 1h4v5M6.500 1v5M1 6.500h8M5 7v4" fill="none" stroke="#153e7e" strokeWidth="1.200" />
  </svg>
);

const Close = () => (
  <svg width="9" height="9" aria-hidden="true">
    <path d="m1 1 7 7M8 1 1 8" stroke="#153e7e" strokeWidth="2" />
  </svg>
);

const ScrollButton = ({ d, label }: { d: string; label: string }) => (
  <button
    aria-label={label}
    className="flex size-4 shrink-0 items-center justify-center rounded-xs border border-[#8b8b8b] bg-linear-to-b from-white to-[#cfcfcf]"
  >
    <svg width="8" height="8" aria-hidden="true">
      <path d={d} fill="#444" />
    </svg>
  </button>
);

const UP = "M0 6h8L4 2z";
const DOWN = "M0 2h8L4 6z";
const LEFT = "M6 0v8L2 4z";
const RIGHT = "M2 0v8l4-4z";

const menu =
  "File,Edit,View,Draw,Model,Graphics,Analyse,Setup,Reserves,Section,Datamine,Geostatistics,Strip Design,Sections,Schemas,Drill Holes,Faults,Quality,Survey Setup,Process,Interrogate,Settings,Windows,Help".split(",");

interface TreeNode {
  name: string;
  level: number;
  icon: string;
  arrow?: "open" | "closed";
  bold?: boolean;
  checked?: boolean;
  selected?: boolean;
}

const leaf = (name: string, extra: Partial<TreeNode> = {}): TreeNode => ({
  name,
  level: 2,
  icon: "smallLayers",
  ...extra,
});

const tree: TreeNode[] = [
  { name: "3D Polygons", level: 0, icon: "polygons" },
  { name: "AutoCAD", level: 0, icon: "autocad", arrow: "closed" },
  { name: "Batch", level: 0, icon: "batch" },
  { name: "Blocks", level: 0, icon: "blocksDoc" },
  { name: "Data", level: 0, icon: "dataDoc", arrow: "closed" },
  { name: "Design Data", level: 0, icon: "designDoc", arrow: "open" },
  { name: "blocks", level: 1, icon: "layerDoc", arrow: "open", bold: true },
  leaf("BB_PRAC"),
  leaf("BB_STRIP"),
  leaf("BLOCKS"),
  leaf("C"),
  leaf("D"),
  leaf("PIT_LIMIT"),
  leaf("PIT_MINE"),
  leaf("PIT_STRIPDES"),
  leaf("RESGRAPH"),
  leaf("SOLID_STRIP", { selected: true }),
  leaf("SOLID_TAMBANG"),
  leaf("SOLID_XXXX", { icon: "smallLayersLock", checked: true }),
  leaf("STRIPS"),
  { name: "dholes", level: 1, icon: "layerDoc", arrow: "closed" },
];

const TreeRow = ({ node }: { node: TreeNode }) => (
  <li
    className={clsx(
      "flex min-h-0 flex-1 items-center",
      node.level === 0 && "pl-[7px]",
      node.level === 1 && "pl-[26px]",
      node.level === 2 && "pl-[58px]"
    )}
  >
    {node.level < 2 && (
      <svg width="10" height="10" className="mr-1 shrink-0" aria-hidden="true">
        {node.arrow === "open" && <path d="M8 2v6H1z" fill="#333" />}
        {node.arrow === "closed" && <path d="m3 1 4 4-4 4z" fill="#fff" stroke="#999" />}
      </svg>
    )}
    {node.level < 2 ? (
      <>
        <Icon id={node.icon} />
        <span className={clsx("pl-[3px]", node.bold && "font-bold")}>{node.name}</span>
      </>
    ) : (
      <label className={clsx("flex h-[18px] items-center pl-px pr-1", node.selected && "bg-black text-white")}>
        <Icon id={node.icon} size="size-[15px]" />
        <span className="relative ml-1 flex">
          <input
            type="checkbox"
            defaultChecked={node.checked}
            className="peer size-[13px] appearance-none border border-[#8e8f8f] bg-linear-to-br from-white to-[#d6d9dc]"
          />
          <svg width="13" height="13" className="pointer-events-none absolute left-0 top-0 hidden peer-checked:block" aria-hidden="true">
            <path d="m4 4 5 5M9 4 4 9" stroke="#222" strokeWidth="1.800" />
          </svg>
        </span>
        <span className="pl-[7px]">{node.name}</span>
      </label>
    )}
  </li>
);

const panels = [
  { icon: "folder", name: "Explorer" },
  { icon: "loaded", name: "Loaded Data" },
  { icon: "project", name: "Projects - Practice" },
  { icon: "people", name: "Sessions - None" },
  { icon: "monitor", name: "Layout - None" },
  { icon: "gears", name: "Modules" },
];

const NavigationBar = () => (
  <aside className="flex w-[270px] shrink-0 flex-col border-l border-[#9dbbe8] bg-[#afcfff]">
    <header className="flex h-4 shrink-0 items-center bg-linear-to-b from-[#93afdb] to-[#9bbbe8] pr-1">
      <Icon id="wheel" size="size-[14px]" />
      <span className="flex-1 pl-1 text-[11px]">Navigation Bar</span>
      <button aria-label="Pin" className="mr-2">
        <Pin />
      </button>
      <button aria-label="Close">
        <Close />
      </button>
    </header>
    <h1 className="flex h-[33px] shrink-0 items-center bg-linear-to-b from-[#e9f2ff] to-[#afcdf9] pl-[11px] pt-px font-['Liberation_Sans',sans-serif] text-base font-bold text-[#5a86c2]">
      <Icon id="folder" size="size-[18px]" className="mr-2" />
      Explorer
    </h1>
    <div className="mr-[2px] flex h-[30px] shrink-0 items-center rounded-sm border-b border-[#6f9be0] bg-linear-to-b from-[#d8e7fd] to-[#b1cffa] pl-1">
      <Grip />
      <Tools items="home back forward details" />
      <span className="mx-1 h-6 w-px bg-[#8fa6c8]" />
      <Tools items="glasses smallLayers gearCloud" />
      <span className="ml-auto h-full w-[10px] rounded-r-sm bg-linear-to-b from-[#b5cff5] to-[#82a8e0]" />
    </div>
    <div className="flex h-[32px] shrink-0 items-center pl-1 pr-1">
      <div className="relative flex h-[20px] w-[188px] items-center border border-[#777f8b] bg-white font-['Roboto',sans-serif] text-xs">
        <Icon id="monitorSmall" size="size-[17px]" className="ml-px" />
        <select aria-label="Filter" className="h-full flex-1 appearance-none pl-px outline-none">
          <option>All</option>
        </select>
        <span className="pointer-events-none absolute right-0 top-0 flex h-full w-[21px] items-center justify-center border-l border-[#777f8b] bg-linear-to-b from-white to-[#cfcfcf]">
          <svg width="8" height="5" aria-hidden="true">
            <path d="M0 0h8L4 4z" fill="#444" />
          </svg>
        </span>
      </div>
      <button className="ml-1 flex h-6 flex-1 items-center justify-center rounded-md bg-[#cfe2ff] font-['Roboto',sans-serif] text-xs">
        Search
        <svg width="11" height="9" className="ml-2" aria-hidden="true">
          <path d="m1 1 4 3.500L1 8M6 1l4 3.500L6 8" fill="none" stroke="#1c3fae" strokeWidth="1.500" />
        </svg>
      </button>
    </div>
    <div className="mr-[2px] flex min-h-0 flex-1 border border-[#7f8c9d] bg-white">
      <ul className="flex min-w-0 flex-1 flex-col overflow-hidden font-['Roboto',sans-serif] text-xs">
        {tree.map((node) => (
          <TreeRow key={node.name} node={node} />
        ))}
      </ul>
      <div className="flex w-4 shrink-0 flex-col bg-[#f0f0f0]">
        <ScrollButton d={UP} label="Scroll up" />
        <div className="h-[153px] rounded-xs border border-[#8b8b8b] bg-linear-to-r from-white to-[#cfcfcf]" />
        <div className="flex-1" />
        <ScrollButton d={DOWN} label="Scroll down" />
      </div>
    </div>
    <div className="flex h-[7px] shrink-0 items-center justify-center bg-linear-to-b from-[#dce9fc] to-[#a9c8f5]">
      <svg width="20" height="3" aria-hidden="true">
        <path d="M0 1.500h20" stroke="#7ba0d8" strokeWidth="2" strokeDasharray="2 2" />
      </svg>
    </div>
    <nav className="mb-[26px] flex shrink-0 flex-col border-b-2 border-[#5f86bf]">
      {panels.map((panel, i) => (
        <button
          key={panel.name}
          className={clsx(
            "flex h-[30px] items-center border-t border-[#2f5a9c] bg-linear-to-b pl-[5px] font-['Liberation_Sans',sans-serif] text-[11px] font-bold",
            i === 0 ? "from-[#ffd9a6] via-[#ffb04a] to-[#ffd07a]" : "from-[#dbe9fd] via-[#b3d2f9] to-[#b9d8fb] text-[#2a5291]"
          )}
        >
          <Icon id={panel.icon} size="size-[17px]" className="mr-[6px]" />
          {panel.name}
        </button>
      ))}
    </nav>
  </aside>
);

// Height of the upper block surface above the base grid, as [column, height]
// pairs on a handful of surveyed rows. Values between them are interpolated.
const surface: { row: number; profile: number[][] }[] = [
  { row: 2, profile: [[-1, 22], [0, 27], [1, 33], [3, 44], [5, 59], [7, 76], [9, 91], [11, 108], [13, 126], [15, 149], [17, 169], [19, 174], [22, 172], [23, 159], [24, 142], [25, 125], [26, 111], [32, 36], [33, 25], [35, 14], [37, 8]] },
  { row: 5, profile: [[-1, 22], [0, 27], [2, 37], [4, 43], [6, 58], [8, 71], [10, 91], [12, 111], [14, 130], [16, 148], [17, 158], [20, 163], [22, 162], [23, 148], [25, 124], [32, 32], [33, 25], [35, 18], [37, 8]] },
  { row: 9, profile: [[-1, 4], [0, 18], [1, 26], [2, 38], [4, 46], [6, 53], [8, 61], [10, 78], [12, 93], [13, 107], [15, 130], [17, 142], [20, 136], [22, 132], [23, 126], [25, 118], [31, 45], [32, 30], [33, 20], [35, 8]] },
  { row: 13, profile: [[-1, 4], [0, 6], [1, 16], [2, 27], [4, 46], [6, 58], [8, 66], [10, 69], [12, 82], [14, 110], [15, 124], [16, 133], [17, 124], [18, 114], [21, 96], [22, 98], [24, 109], [31, 25], [32, 12], [34, 6]] },
  { row: 14, profile: [[-1, 4], [0, 6], [2, 24], [5, 57], [8, 70], [10, 71], [12, 82], [14, 108], [16, 125], [18, 112], [19, 97], [20, 89], [22, 87], [24, 92], [30, 30], [32, 10]] },
];

const along = (profile: number[][], col: number) => {
  if (col <= profile[0][0]) return profile[0][1];
  for (let k = 1; k < profile.length; k++) {
    const [c0, h0] = profile[k - 1];
    const [c1, h1] = profile[k];
    if (col <= c1) return h0 + ((h1 - h0) * (col - c0)) / (c1 - c0);
  }
  return profile[profile.length - 1][1];
};

const heightAt = (col: number, row: number) => {
  const last = surface[surface.length - 1];
  if (row <= surface[0].row) return along(surface[0].profile, col);
  if (row >= last.row) return along(last.profile, col);
  const k = surface.findIndex((s) => s.row > row);
  const a = surface[k - 1];
  const b = surface[k];
  const t = (row - a.row) / (b.row - a.row);
  return along(a.profile, col) * (1 - t) + along(b.profile, col) * t;
};

const toView = (x: number, y: number) => [Math.round(x / 3 - 9), Math.round(y / 3 - 6)];
const base = (col: number, row: number) => toView(42 + 107.5 * col + 18.3 * row, 67 - 2.1 * col + 105.4 * row);
const upper = (col: number, row: number) => {
  const h = heightAt(col, row);
  return toView(42 + 107.5 * col + 18.3 * row + 0.83 * h, 67 - 2.1 * col + 105.4 * row - h);
};

const range = (from: number, to: number) => Array.from({ length: to - from + 1 }, (_, i) => from + i);
const cols = range(-4, 38);
const rows = range(-1, 15);

const toPath = (points: number[][]) => "M" + points.map((p) => p.join(" ")).join("L");

const mesh = [
  ...rows.map((r) => toPath(cols.map((c) => base(c, r)))),
  ...rows.map((r) => toPath(cols.map((c) => upper(c, r)))),
  ...cols.map((c) => toPath(rows.map((r) => base(c, r)))),
  ...cols.map((c) => toPath(rows.map((r) => upper(c, r)))),
  ...rows.flatMap((r) => cols.map((c) => toPath([base(c, r), upper(c, r)]))),
].join("");

const centres = rows.flatMap((r) => cols.map((c) => base(c + 0.5, r + 0.5)));

const Viewport = () => (
  <div className="relative min-h-0 flex-1 border border-white">
    <div className="h-full overflow-hidden border-2 border-[#0000f0] bg-black">
      <svg width="100%" height="100%" shapeRendering="crispEdges" role="img" aria-label="Block model wireframe">
        <clipPath id="pit">
          <path d="M0 0H3000V2000H95L71 469 61 455 51 434 34 402 24 364 14 334 0 321z" />
        </clipPath>
        <g clipPath="url(#pit)">
          <path d={mesh} fill="none" stroke="#00ffff" transform="translate(.5 .5)" />
          {centres.map(([x, y]) => (
            <rect key={`${x},${y}`} x={x} y={y} width="2" height="2" fill="#fff" />
          ))}
        </g>
        <path
          d="M0 321 14 335 24 366 35 402 53 440 64 461 92 491M0 324 12 336 23 366 30 390 45 420 52 437 63 459 71 470 88 491"
          fill="none"
          stroke="#00ffff"
          transform="translate(.5 .5)"
        />
      </svg>
    </div>
    {[
      "left-[-2px] top-[-2px]",
      "left-1/2 top-[-2px] -translate-x-1/2",
      "right-[-2px] top-[-2px]",
      "left-[-2px] top-1/2 -translate-y-1/2",
      "right-[-2px] top-1/2 -translate-y-1/2",
      "left-[-2px] bottom-[-2px]",
      "left-1/2 bottom-[-2px] -translate-x-1/2",
      "right-[-2px] bottom-[-2px]",
    ].map((place) => (
      <span key={place} className={clsx("absolute size-[7px] rounded-full border border-white bg-black", place)} />
    ))}
  </div>
);

const log = [
  "Download Complete",
  "Loading display blocks : SOLID_STRIP",
  "Created reference BLOCKS",
  "Download Complete",
  "Loading display blocks : SOLID_XXXX",
  "Created reference BLOCKS",
  "Download Complete",
];

const Feedback = () => (
  <section className="flex h-[193px] shrink-0 flex-col">
    <div className="h-[5px] shrink-0 border-y border-[#1d3c70] bg-[#8fb1e6]" />
    <header className="flex h-[17px] shrink-0 items-center bg-linear-to-b from-[#93afdb] to-[#9bbbe8] pr-[5px]">
      <Icon id="feedback" size="size-[15px]" />
      <span className="flex-1 pl-[3px] text-[11px]">Feedback</span>
      <button aria-label="Pin" className="mr-2">
        <Pin />
      </button>
      <button aria-label="Close">
        <Close />
      </button>
    </header>
    <div className="flex min-h-0 flex-1 pb-[2px] pt-px">
      <div className="mr-[2px] flex w-7 shrink-0 flex-col items-center rounded-sm bg-linear-to-r from-[#dfebfc] to-[#b3d0fa]">
        <svg width="19" height="3" className="my-[3px] shrink-0" aria-hidden="true">
          <path d="M0 1.500h19" stroke="#6f9be0" strokeWidth="2" strokeDasharray="2 2" />
        </svg>
        <Tools items="save copy eraser print mail" />
        <div className="mt-auto h-[10px] w-full rounded-b-sm bg-linear-to-r from-[#b5cff5] to-[#82a8e0]" />
      </div>
      <div className="flex min-w-0 flex-1 flex-col border border-[#7b8088] bg-white">
        <div className="flex min-h-0 flex-1">
          <ul className="flex flex-1 flex-col font-['Liberation_Mono',monospace] text-[11px] text-[#10246b]">
            {log.map((line, i) => (
              <li
                key={i}
                className={clsx(
                  "flex min-h-0 flex-1 items-center border-y pl-2",
                  i === log.length - 1 ? "border-[#cfcfcf] bg-linear-to-b from-[#f2f2f2] to-[#dedede]" : "border-transparent"
                )}
              >
                <svg width="9" height="9" className="mr-[13px] shrink-0" aria-hidden="true">
                  <circle cx="4.500" cy="4.500" r="4.300" fill="#1c62bd" />
                  <path d="M4.500 2v1.300M4.500 4v3" stroke="#fff" strokeWidth="1.300" />
                </svg>
                <span className="whitespace-pre">{line}</span>
              </li>
            ))}
          </ul>
          <div className="flex w-4 shrink-0 flex-col bg-[#f0f0f0] pt-px">
            <ScrollButton d={UP} label="Scroll up" />
            <div className="flex-1" />
            <div className="h-7 rounded-xs border border-[#8b8b8b] bg-linear-to-r from-white to-[#cfcfcf]" />
            <ScrollButton d={DOWN} label="Scroll down" />
          </div>
        </div>
        <div className="mr-[18px] mt-[2px] flex h-[19px] shrink-0 items-center bg-[#f0f0f0] pl-px">
          <ScrollButton d={LEFT} label="Scroll left" />
          <div className="ml-px h-4 w-[150px] rounded-xs border border-[#8b8b8b] bg-linear-to-b from-white to-[#cfcfcf]" />
          <div className="flex-1" />
          <ScrollButton d={RIGHT} label="Scroll right" />
        </div>
      </div>
    </div>
    <div className="flex h-[22px] shrink-0 items-stretch border-t border-[#1d4f94] pl-[2px] text-[11px] text-[#1f4a94]">
      <button className="mb-px flex w-[76px] items-center rounded-b-sm bg-[#edf4ff] pb-px pl-[3px]">
        <Icon id="feedback" size="size-[15px]" className="mr-1" />
        Feedback
      </button>
      <button className="flex w-[66px] items-center pb-[2px] pl-[10px]">
        <Icon id="tracer" size="size-[15px]" className="mr-1" />
        Tracer
      </button>
      <button className="flex items-center pb-[2px] pl-[10px]">
        <Icon id="snapshot" size="size-[15px]" className="mr-1" />
        Snapshot
      </button>
    </div>
  </section>
);

const sideTools = [
  "winNew winClose winHand",
  "winText winAxes winRuler winGrid",
  "winSplitH winSplitV",
  "winPair winLock rulerLock",
  "picSearch picGrey",
  "stackBack stackMid stackFront stackTop",
];

const SideToolbar = () => (
  <div className="mr-px flex w-7 shrink-0 flex-col items-center self-start rounded-sm border-r border-[#6f9be0] bg-linear-to-r from-[#dfebfc] to-[#b3d0fa]">
    <svg width="19" height="3" className="mb-1 mt-[3px]" aria-hidden="true">
      <path d="M0 1.500h19" stroke="#6f9be0" strokeWidth="2" strokeDasharray="2 2" />
    </svg>
    {sideTools.map((items, i) => (
      <div key={i} className="flex flex-col items-center">
        {i > 0 && <span className="my-[2px] h-px w-4 bg-white" />}
        <Tools items={items} active={["winAxes"]} />
      </div>
    ))}
    <button aria-label="Toolbar options" className="mt-2 flex h-[11px] w-full items-center justify-end rounded-b-sm bg-linear-to-r from-[#c3d9f8] to-[#7fa6de] pr-[3px]">
      <svg width="7" height="7" aria-hidden="true">
        <path d="M1 0v7M3 0l3 3.500L3 7z" stroke="#000" />
      </svg>
    </button>
  </div>
);

const lineStyles = [
  { label: "Colour", width: 0 },
  { label: "Line weight", width: 2 },
  { label: "Line type", width: 1 },
  { label: "Pattern", width: 0 },
  { label: "Symbol", width: 0 },
];

const App = () => {
  return (
    <div className="flex h-screen overflow-hidden bg-[#eef8f6] pr-[15px] font-['Open_Sans',sans-serif] text-[#10151f]">
      <div className="flex min-w-0 flex-1 flex-col bg-[#bfdbff]">
        <nav className="flex h-[23px] shrink-0 items-center gap-3 pl-[7px] pt-[2px] text-[11px]">
          {menu.map((item) => (
            <button key={item} className="whitespace-nowrap">
              {item}
            </button>
          ))}
        </nav>

        <div className="flex h-7 shrink-0 gap-[3px] pl-[2px]">
          <Toolbar>
            <Tools items="wheel form windows tools puzzle help" active={["wheel"]} />
          </Toolbar>
          <Toolbar>
            <Tools
              items="glasses | sheet fontEdit torch contrast nodeEdit panel | axes axesLock axesBox | photoOpen photoSave | sync slab slabLock"
              active={["slab", "slabLock"]}
            />
          </Toolbar>
          <Toolbar>
            <Tools items="register fit zoomBox pickBox layerBox layerBox | zoomPlus zoomIn zoomOut" />
          </Toolbar>
          <Toolbar>
            <Tools items="layers folderGrey layersGrey clip clipCut undo" />
          </Toolbar>
          <Toolbar>
            <Tools items="swatches bucket dashes lines brush | shell" />
          </Toolbar>
          <Toolbar>
            <Tools items="newLayers | text points line flag pentagon circle rect skew arc" />
          </Toolbar>
        </div>

        <div className="flex h-7 shrink-0 gap-[3px] pl-[2px]">
          <Toolbar>
            <Tools items="pencil | curvePick curves angle curveLens drape shift wave curveCut zigs | insert moveAxis extend terrain | zpath breakPick breakLine bomb" />
          </Toolbar>
          <Toolbar>
            <Tools items="snapPoint snapCorner snapLine snapMid snapGrid snapCross" active={["snapCorner"]} />
          </Toolbar>
          <Toolbar>
            <div className="flex gap-px">
              {lineStyles.map((style, i) => (
                <button
                  key={style.label}
                  aria-label={style.label}
                  className="flex h-6 w-8 items-stretch border border-[#8d9299] bg-[#d6d6d6]"
                >
                  <span className={clsx("flex flex-1 items-center justify-center", i === 0 && "bg-white")}>
                    {style.width > 0 && (
                      <span className="w-5 bg-black" style={{ height: style.width, opacity: style.width > 1 ? 1 : 0.6 }} />
                    )}
                  </span>
                  <span className="flex w-2 items-center justify-center border-l border-[#8d9299]">
                    <svg width="5" height="3" aria-hidden="true">
                      <path d="M0 0h5L2.500 3z" />
                    </svg>
                  </span>
                </button>
              ))}
            </div>
          </Toolbar>
          <Toolbar>
            <Tools
              items="boxGear boxHand | boxSunGrey boxSun sunPick sun | lasso boxPick boxFill boxCut | boxCentre boxEdge"
              active={["boxCentre", "boxEdge"]}
            />
          </Toolbar>
        </div>

        <div className="flex min-h-0 flex-1">
          <NavigationBar />
          <div className="w-[6px] shrink-0 border-x-2 border-[#27487f] bg-[#8fb1e6]" />
          <main className="flex min-w-0 flex-1 flex-col">
            <div className="flex h-6 shrink-0 items-end border-b border-[#8db2ea] pl-[2px]">
              <button className="flex h-[21px] w-[73px] items-center rounded-t-sm border border-b-0 border-[#8db2ea] bg-[#edf4ff] pl-[2px] pt-px text-xs text-[#1f4a94]">
                <Icon id="blocksTab" className="mr-1" />
                <span>BLOCKS</span>
              </button>
              <button aria-label="Close view" className="mb-2 ml-auto mr-1">
                <Close />
              </button>
            </div>
            <Viewport />
            <Feedback />
          </main>
          <div className="w-[2px] shrink-0" />
          <SideToolbar />
        </div>

        <div className="flex h-7 shrink-0 gap-[3px] pl-[2px] pt-px text-xs">
          <Toolbar>
            <label htmlFor="Status" className="w-[38px] text-[11px]">
              Status
            </label>
            <Select label="Status" value="Ready..." className="w-[312px] text-[11px] text-[#0000d8]" />
          </Toolbar>
          <Toolbar>
            <label htmlFor="Stowed" className="w-[45px] text-[11px]">
              Stowed
            </label>
            <Select label="Stowed" value="" className="w-[304px]" />
          </Toolbar>
          <Toolbar>
            <label htmlFor="Modules" className="w-[52px] text-[11px]">
              Modules
            </label>
            <Select label="Modules" value="Unload a design file in DXF format" className="w-[298px] pl-1 text-[11px]">
              <Icon id="check" className="mr-1" />
            </Select>
            <Tools items="rewind pause play stop | cancel | save notebook" />
          </Toolbar>
          <Toolbar>
            <Tools items="cubeTop cubeBottom cubeLeft cubeRight cubeFront | cubeBack gemA gemB gemC gemD" />
          </Toolbar>
        </div>

        <footer className="flex h-[22px] shrink-0 items-center bg-linear-to-b from-[#e0ecfd] to-[#b8d4fb] pl-[11px] pt-[2px] text-[11px] text-[#1f4a94]">
          <span className="w-[207px] text-xs">485000.497, 9842202.856, 6796.993</span>
          <span className="mr-[13px] h-4 w-px bg-white" />
          <label htmlFor="Viewport" className="w-[53px]">
            Viewport:
          </label>
          <Select label="Viewport" value="MAIN" className="w-[123px] text-black" />
          <span className="ml-[3px] mr-[13px] h-4 w-px bg-white" />
          <label htmlFor="Scale" className="w-[46px]">
            Scale 1 :
          </label>
          <Select label="Scale" value="10740" className="w-[98px] text-black" />
          <span className="ml-[3px] mr-[15px] h-4 w-px bg-white" />
          <label htmlFor="ActiveZ" className="w-[49px]">
            Active Z:
          </label>
          <Select label="ActiveZ" value="0.000" className="w-[100px] text-black" />
          <span className="ml-[3px] mr-[13px] h-4 w-px bg-white" />
          <span>Selected: 0</span>
        </footer>
      </div>
    </div>
  );
};

export default App;
